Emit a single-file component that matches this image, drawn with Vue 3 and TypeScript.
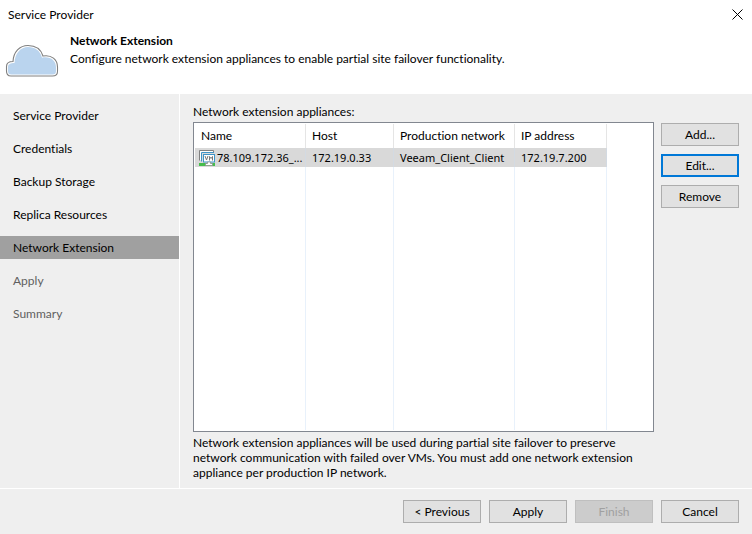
<script setup lang="ts">
import { ref } from 'vue'

interface Step {
  label: string
  pending?: boolean
}

interface Appliance {
  name: string
  host: string
  network: string
  ip: string
}

const steps: Step[] = [
  { label: 'Service Provider' },
  { label: 'Credentials' },
  { label: 'Backup Storage' },
  { label: 'Replica Resources' },
  { label: 'Network Extension' },
  { label: 'Apply', pending: true },
  { label: 'Summary', pending: true },
]
const current = ref('Network Extension')

const appliances: Appliance[] = [
  { name: '78.109.172.36_...', host: '172.19.0.33', network: 'Veeam_Client_Client', ip: '172.19.7.200' },
]
const selected = ref(0)
</script>

<template>
  <div class="wizard">
    <header class="top">
      <div class="titlebar">
        <span>Service Provider</span>
        <button class="close" type="button" aria-label="Close">
          <svg width="11" height="11" viewBox="0 0 11 11"><path d="M.5 .5l10 10M10.5 .5l-10 10" stroke="#000" fill="none" /></svg>
        </button>
      </div>
      <div class="banner">
        <svg class="cloud" width="54" height="34" viewBox="0 0 54 34">
          <path
            d="M6 32C2.600 32 1.500 30 1.500 27v-4.500C1.500 19.500 4 17.500 8 17.500C8.500 8 14.500 1.500 23 1.500C30.500 1.500 36 5.500 38 12C46.500 10.500 52.500 15.500 52.500 23v4.500C52.500 30.500 50.500 32 47.500 32Z"
            fill="#fff" stroke="#808080" stroke-width="1.1"
          />
          <path
            d="M6.500 30.500C4 30.500 3 29.500 3 27v-4C3 20 5.500 19 9.500 19C9.800 9.500 15.500 3 23 3C30 3 35.500 7 37 13.700C45 12 51 16.500 51 23v4C51 29.500 50 30.500 47.500 30.500Z"
            fill="#bad4ee"
          />
        </svg>
        <div>
          <h1>Network Extension</h1>
          <p>Configure network extension appliances to enable partial site failover functionality.</p>
        </div>
      </div>
    </header>

    <div class="body">
      <nav class="steps" aria-label="Wizard steps">
        <button
          v-for="step in steps"
          :key="step.label"
          type="button"
          class="step"
          :class="{ active: step.label === current, pending: step.pending }"
          @click="current = step.label"
        >{{ step.label }}</button>
      </nav>

      <main class="content">
        <h2 id="list-label">Network extension appliances:</h2>
        <div class="work">
          <div class="list">
            <table aria-labelledby="list-label">
              <colgroup>
                <col class="c-name" /><col class="c-host" /><col class="c-network" /><col class="c-ip" />
              </colgroup>
              <thead>
                <tr><th>Name</th><th>Host</th><th>Production network</th><th>IP address</th></tr>
              </thead>
              <tbody>
                <tr
                  v-for="(item, i) in appliances"
                  :key="item.name"
                  class="row"
                  :class="{ selected: i === selected }"
                  @click="selected = i"
                >
                  <td>
                    <div class="name">
                      <svg width="16" height="16" viewBox="0 0 16 16">
                        <path d="M.5 10.500V.5H14.500V3" fill="none" stroke="#808080" />
                        <path d="M1 1H14V3H3V10H1Z" fill="#fff" />
                        <path d="M2.500 11.500V2.500H15" fill="none" stroke="#3f93c6" />
                        <path d="M0 13H16V16H0Z" fill="#45bd4b" />
                        <rect x="4.500" y="4.500" width="11" height="7.500" fill="#fff" stroke="#3f93c6" />
                        <path d="M6 6l1.500 4L9 6M10.500 10.500V6.500l1.500 2l1.500-2V10.500" fill="none" stroke="#777" />
                        <path d="M8.500 12h3v1.500h2V15.500H6.500v-2h2Z" fill="#fff" stroke="#888" stroke-width=".7" />
                      </svg>
                      <span>{{ item.name }}</span>
                    </div>
                  </td>
                  <td>{{ item.host }}</td>
                  <td>{{ item.network }}</td>
                  <td>{{ item.ip }}</td>
                </tr>
                <tr class="filler" aria-hidden="true"><td></td><td></td><td></td><td></td></tr>
              </tbody>
            </table>
          </div>
          <div class="actions">
            <button class="btn" type="button">Add...</button>
            <button class="btn focused" type="button">Edit...</button>
            <button class="btn" type="button">Remove</button>
          </div>
        </div>
        <p class="hint">
          Network extension appliances will be used during partial site failover to preserve network
          communication with failed over VMs. You must add one network extension appliance per
          production IP network.
        </p>
      </main>
    </div>

    <footer class="footer">
      <button class="btn" type="button">&lt; Previous</button>
      <button class="btn" type="button">Apply</button>
      <button class="btn" type="button" disabled>Finish</button>
      <button class="btn" type="button">Cancel</button>
    </footer>
  </div>
</template>

<style>
body {
  margin: 0;
  background: #efefef;
}
</style>

<style scoped>
.wizard {
  box-sizing: border-box;
  min-height: 100vh;
  display: flex;
  flex-direction: column;
  background: #efefef;
  color: #000;
  font: 12px/15px Lato, "Noto Sans", sans-serif;
  font-variant-ligatures: none;
}
button {
  font: inherit;
  font-variant-ligatures: none;
  color: inherit;
}
h1, h2, p {
  margin: 0;
  font-size: 12px;
}
.top {
  background: #fff;
  padding-bottom: 16px;
}
.titlebar {
  display: flex;
  align-items: center;
  justify-content: space-between;
  height: 28px;
  padding: 0 9px 0 8px;
}
.close {
  display: flex;
  padding: 0;
  border: 0;
  background: none;
}
.banner {
  display: flex;
  gap: 11px;
  padding: 5px 8px 0 5px;
}
.banner p {
  margin-top: 3px;
}
.cloud {
  flex: none;
  margin-top: 11px;
}
.body {
  flex: 1;
  display: flex;
}
.steps {
  box-sizing: border-box;
  width: 180px;
  flex: none;
  display: flex;
  flex-direction: column;
  gap: 10px;
  padding-top: 10px;
  border-right: 1px solid #fff;
}
.step {
  height: 23px;
  padding: 0 13px;
  border: 0;
  background: none;
  text-align: left;
}
.step.pending {
  color: #5f5f5f;
}
.step.active {
  background: #a0a0a0;
}
.content {
  flex: 1;
  min-width: 0;
  display: flex;
  flex-direction: column;
  padding: 10px 13px 8px;
}
h2 {
  font-weight: 400;
  margin-bottom: 3px;
}
.work {
  flex: 1;
  display: flex;
  gap: 7px;
}
.list {
  flex: 1;
  display: flex;
  padding: 1px;
  border: 1px solid #828790;
  background: #fff;
}
table {
  table-layout: fixed;
  width: 412px;
  border-collapse: separate;
  border-spacing: 0;
}
.c-name { width: 111px; }
.c-host { width: 88px; }
.c-network { width: 121px; }
.c-ip { width: 92px; }
th, td {
  box-sizing: border-box;
  padding: 0 0 0 6px;
  text-align: left;
  font-weight: 400;
  white-space: nowrap;
  border-right: 1px solid #e8f1fb;
}
th {
  height: 24px;
  padding-bottom: 2px;
  border-right-color: #e5e5e5;
}
.row td {
  height: 19px;
  font-family: "Noto Sans", sans-serif;
  font-size: 11px;
}
.row.selected td {
  background: #d9d9d9;
  border-right-color: #d3dae2;
}
.row td:first-child {
  padding-left: 4px;
}
.filler td {
  height: 100%;
}
.name {
  display: flex;
  align-items: center;
  gap: 2px;
}
.name svg {
  flex: none;
}
.actions {
  display: flex;
  flex-direction: column;
  gap: 8px;
  padding-top: 1px;
}
.btn {
  box-sizing: border-box;
  width: 78px;
  height: 23px;
  padding: 0;
  border: 1px solid #adadad;
  background: #e1e1e1;
}
.btn.focused {
  border: 2px solid #0078d7;
}
.btn:disabled {
  color: #a0a0a0;
  border-color: #bfbfbf;
  background: #ccc;
}
.hint {
  max-width: 460px;
  margin-top: 3px;
}
.footer {
  display: flex;
  justify-content: flex-end;
  gap: 8px;
  padding: 11px 13px;
  border-top: 1px solid #fff;
}
</style>
